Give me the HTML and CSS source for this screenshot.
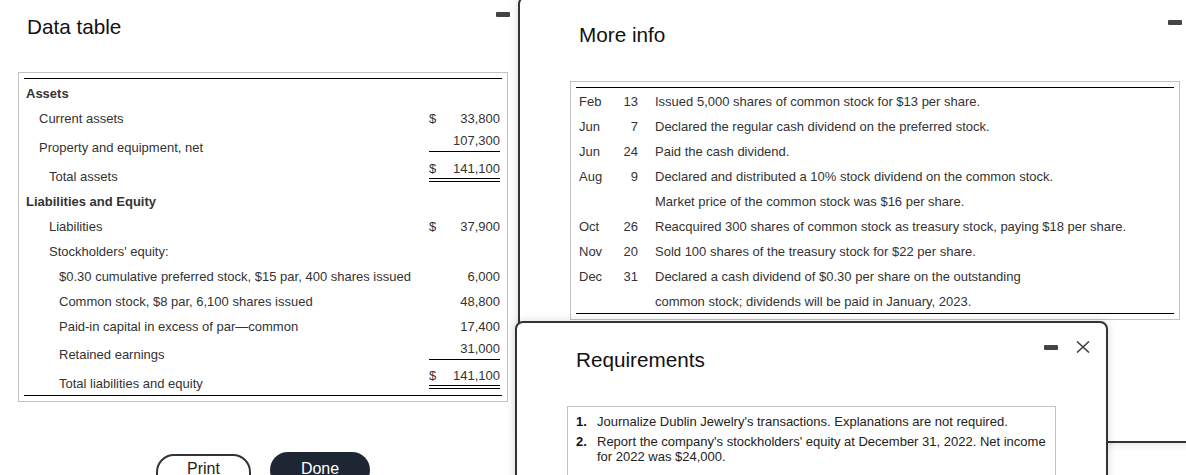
FILE: index.html
```html
<!DOCTYPE html>
<html lang="en">
<head>
    <meta charset="UTF-8">
    <meta name="viewport" content="width=device-width, initial-scale=1.0">
    <title>Data table - More info - Requirements</title>
    <link rel="stylesheet" href="styles.css">
</head>
<body>
    <div class="desk">

        <!-- Data table window -->
        <section class="window data-window">
            <header class="win-head">
                <h2 class="win-title">Data table</h2>
                <span class="win-min"></span>
                <svg class="win-close" viewBox="0 0 14 12"><path d="M1 0.5 L13 11.5 M13 0.5 L1 11.5" /></svg>
            </header>
            <div class="win-box">
                <div class="sheet">
                    <div class="row"><span class="label lv0">Assets</span></div>
                    <div class="row">
                        <span class="label lv1">Current assets</span>
                        <span class="amt"><span>$</span><span class="num">33,800</span></span>
                    </div>
                    <div class="row sub">
                        <span class="label lv1">Property and equipment, net</span>
                        <span class="amt"><span class="num">107,300</span></span>
                    </div>
                    <div class="row total">
                        <span class="label lv2">Total assets</span>
                        <span class="amt"><span>$</span><span class="num">141,100</span></span>
                    </div>
                    <div class="row"><span class="label lv0">Liabilities and Equity</span></div>
                    <div class="row">
                        <span class="label lv2">Liabilities</span>
                        <span class="amt"><span>$</span><span class="num">37,900</span></span>
                    </div>
                    <div class="row"><span class="label lv2">Stockholders' equity:</span></div>
                    <div class="row">
                        <span class="label lv3">$0.30 cumulative preferred stock, $15 par, 400 shares issued</span>
                        <span class="amt"><span class="num">6,000</span></span>
                    </div>
                    <div class="row">
                        <span class="label lv3">Common stock, $8 par, 6,100 shares issued</span>
                        <span class="amt"><span class="num">48,800</span></span>
                    </div>
                    <div class="row">
                        <span class="label lv3">Paid-in capital in excess of par&mdash;common</span>
                        <span class="amt"><span class="num">17,400</span></span>
                    </div>
                    <div class="row sub short">
                        <span class="label lv3">Retained earnings</span>
                        <span class="amt"><span class="num">31,000</span></span>
                    </div>
                    <div class="row total">
                        <span class="label lv3">Total liabilities and equity</span>
                        <span class="amt"><span>$</span><span class="num">141,100</span></span>
                    </div>
                </div>
            </div>
            <div class="actions">
                <button class="btn btn-print">Print</button>
                <button class="btn btn-done">Done</button>
            </div>
        </section>

        <!-- More info window -->
        <section class="window info-window">
            <header class="win-head">
                <h2 class="win-title">More info</h2>
                <span class="win-min"></span>
                <svg class="win-close" viewBox="0 0 14 12"><path d="M1 0.5 L13 11.5 M13 0.5 L1 11.5" /></svg>
            </header>
            <div class="win-box">
                <div class="sheet">
                    <div class="entry"><span class="mon">Feb</span><span class="day">13</span><span class="desc">Issued 5,000 shares of common stock for $13 per share.</span></div>
                    <div class="entry"><span class="mon">Jun</span><span class="day">7</span><span class="desc">Declared the regular cash dividend on the preferred stock.</span></div>
                    <div class="entry"><span class="mon">Jun</span><span class="day">24</span><span class="desc">Paid the cash dividend.</span></div>
                    <div class="entry"><span class="mon">Aug</span><span class="day">9</span><span class="desc">Declared and distributed a 10% stock dividend on the common stock.</span></div>
                    <div class="entry"><span class="mon"></span><span class="day"></span><span class="desc">Market price of the common stock was $16 per share.</span></div>
                    <div class="entry"><span class="mon">Oct</span><span class="day">26</span><span class="desc">Reacquired 300 shares of common stock as treasury stock, paying $18 per share.</span></div>
                    <div class="entry"><span class="mon">Nov</span><span class="day">20</span><span class="desc">Sold 100 shares of the treasury stock for $22 per share.</span></div>
                    <div class="entry"><span class="mon">Dec</span><span class="day">31</span><span class="desc">Declared a cash dividend of $0.30 per share on the outstanding</span></div>
                    <div class="entry last"><span class="mon"></span><span class="day"></span><span class="desc">common stock; dividends will be paid in January, 2023.</span></div>
                </div>
            </div>
        </section>

        <!-- Requirements window -->
        <section class="window req-window">
            <header class="win-head">
                <h2 class="win-title">Requirements</h2>
                <span class="win-min"></span>
                <svg class="win-close" viewBox="0 0 14 12"><path d="M1 0.5 L13 11.5 M13 0.5 L1 11.5" /></svg>
            </header>
            <div class="win-box req-box">
                <ol class="req-list">
                    <li><b class="req-num">1.</b><span>Journalize Dublin Jewelry's transactions. Explanations are not required.</span></li>
                    <li><b class="req-num">2.</b><span>Report the company's stockholders' equity at December 31, 2022. Net income for 2022 was $24,000.</span></li>
                </ol>
            </div>
        </section>

    </div>
</body>
</html>
```

FILE: styles.css
```css
/* General Styles */
body {
    margin: 0;
    padding: 0;
    font-family: "Liberation Sans", Arial, sans-serif;
    background-color: #fff;
}

.desk {
    position: relative;
    width: 1186px;
    height: 475px;
    overflow: hidden;
    background-color: #fff;
}

/* Window frame (the dialogs sit on the desk like windows) */
.window {
    position: absolute;
    box-sizing: border-box;
    background-color: #fff;
    border: 2px solid #333;
    border-radius: 8px;
    padding: 0 50px;
    box-shadow: 0 0 10px rgba(0, 0, 0, 0.15);
}

.data-window {
    left: -34px;
    top: -12px;
    width: 594px;
    height: 540px;
    z-index: 1;
}

.data-window .win-box {
    margin-top: 33px;
}

.info-window {
    left: 518px;
    top: -4px;
    width: 714px;
    height: 447px;
    z-index: 2;
}

.req-window {
    left: 515px;
    top: 321px;
    width: 593px;
    height: 220px;
    z-index: 3;
}

/* Window header */
.win-head {
    display: flex;
    align-items: flex-start;
    margin-right: -34px;
    padding-top: 18px;
}

.win-title {
    flex: 1;
    margin: 7px 0 0;
    padding-left: 9px;
    font-size: 20.7px;
    line-height: 24px;
    font-weight: normal;
    color: #111;
}

.win-min {
    width: 14px;
    height: 5px;
    margin-top: 4px;
    background-color: #444;
    border-radius: 1px;
}

.win-close {
    width: 14px;
    height: 12px;
    margin-left: 18px;
}

.win-close path {
    stroke: #444;
    stroke-width: 1.6;
    fill: none;
}

.win-box {
    margin-top: 34px;
    border: 1px solid #c2c2c2;
    padding: 5px;
}

/* Ruled sheet inside a box */
.sheet {
    border-top: 1px solid #000;
    border-bottom: 1px solid #000;
    padding-top: 1px;
    font-size: 13px;
    color: #333;
}

/* Balance sheet rows */
.row {
    box-sizing: border-box;
    display: flex;
    align-items: center;
    height: 25px;
    padding-top: 2px;
    line-height: 15px;
}

.label {
    flex: 1;
}

.lv0 {
    padding-left: 2px;
    font-weight: bold;
}

.lv1 {
    padding-left: 15px;
}

.lv2 {
    padding-left: 25px;
}

.lv3 {
    padding-left: 35px;
}

.amt {
    display: flex;
    width: 71px;
    margin-right: 2px;
}

.num {
    margin-left: auto;
}

.row.sub,
.row.total {
    height: 29px;
}

.row.short {
    height: 28px;
}

.row.sub .label,
.row.total .label {
    align-self: flex-end;
    padding-bottom: 4px;
}

.row.sub .amt {
    align-self: flex-start;
    margin-top: 1px;
    padding-bottom: 3px;
    border-bottom: 1px solid #000;
}

.row.total .amt {
    align-self: flex-start;
    padding-bottom: 2px;
    border-bottom: 4px double #000;
}

/* Buttons under the data table */
.actions {
    display: flex;
    justify-content: center;
    align-items: flex-start;
    gap: 19px;
    margin-top: 50px;
}

.btn {
    box-sizing: border-box;
    font-family: inherit;
    font-size: 16px;
    line-height: 18px;
    border-radius: 18px;
    cursor: pointer;
}

.btn-print {
    width: 95px;
    margin-top: 2px;
    padding: 4px 0 12px;
    border: 2px solid #333;
    background-color: #fff;
    color: #222;
}

.btn-done {
    width: 100px;
    padding: 8px 0 10px;
    border: none;
    background-color: #1e2533;
    color: #fff;
}

/* More info entries */
.entry {
    display: flex;
    align-items: center;
    height: 25px;
    line-height: 15px;
}

.entry.last {
    height: 24px;
}

.mon {
    width: 42px;
    padding-left: 3px;
}

.day {
    width: 17px;
    text-align: right;
}

.desc {
    padding-left: 17px;
}

/* Requirements list */
.req-box {
    padding: 7px 4px 20px 8px;
}

.req-list {
    list-style: none;
    margin: 0;
    padding: 0;
    font-size: 13px;
    line-height: 15px;
    color: #222;
}

.req-list li {
    display: flex;
}

.req-list li + li {
    margin-top: 5px;
}

.req-num {
    flex: none;
    width: 21px;
    color: #111;
}
```
